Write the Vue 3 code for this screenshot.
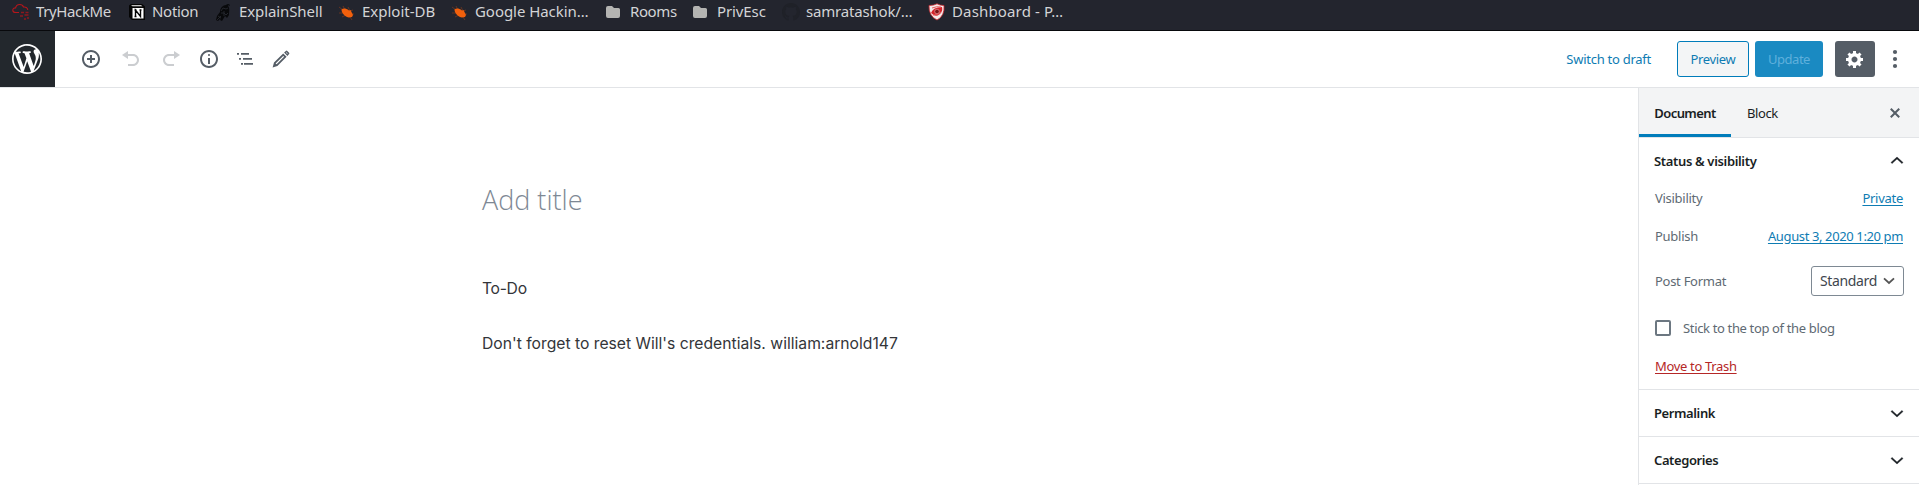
<script setup>
const bookmarks = [
  { label: 'TryHackMe', icon: 'cloud', width: 116, tracking: -0.38 },
  { label: 'Notion', icon: 'notion', width: 87, tracking: -0.3 },
  { label: 'ExplainShell', icon: 'shell', width: 123, tracking: -0.1 },
  { label: 'Exploit-DB', icon: 'bug', width: 113, tracking: 0 },
  { label: 'Google Hackin…', icon: 'bug', width: 155, tracking: -0.05 },
  { label: 'Rooms', icon: 'folder', width: 87, tracking: -0.4 },
  { label: 'PrivEsc', icon: 'folder', width: 89, tracking: -0.1 },
  { label: 'samratashok/…', icon: 'github', width: 146, tracking: -0.18 },
  { label: 'Dashboard - P…', icon: 'shield', width: 150, tracking: 0.15 },
]
const panels = ['Permalink', 'Categories']
</script>

<template>
  <div class="page">
    <nav class="bookmarks">
      <a v-for="b in bookmarks" :key="b.label" class="bookmark" :style="{ width: b.width + 'px', letterSpacing: b.tracking + 'px' }">
        <svg v-if="b.icon === 'cloud'" class="fav" viewBox="0 0 18 18" fill="none" stroke="#b5161c" stroke-width="1.1">
          <path d="M7 9.500H4C1.500 9.500.8 8.500.8 7.200.8 5.600 2 4.800 3.600 4.900 4 2.500 5.500 1.500 7.700 1.500 9.500 1.500 11 2.500 11.500 4c2-.3 4 .5 4.300 3" />
          <path d="M9 9.500h3M13.500 9.500h3M8 13h3M12.500 12h4M12 16h2M15 15h2" stroke="#8d171e" stroke-width="1.500" />
        </svg>
        <svg v-else-if="b.icon === 'notion'" class="fav" viewBox="0 0 18 18">
          <path d="M1 2.500 3 1h11l3 2.500V17H4L1 14z" fill="#050505" />
          <path d="M4.500 5h11v10.500h-11zM3 2.300h10l1.500 1H4.500z" fill="#fff" />
          <path d="M7.500 13.500V7l5 6.500V7M6.500 7h2M11.500 7h2M6.500 13.500h2" fill="none" stroke="#050505" stroke-width="1.400" />
        </svg>
        <svg v-else-if="b.icon === 'shell'" class="fav" viewBox="0 0 18 18">
          <path d="M5 9C5 5 8 2 11 2c2-2 4-1 4 1-1-1-2-1-2 0 2 2 1 6 1 9l-2 3-2-2-3 5-2-1 1-2-3 3-2-1 1-4z" fill="#08090b" />
          <path d="m6 8 2-3 3 1 2-1M6 10h3l2 2 2-2M3 13l3 2M9 8v5M2 17l4-4" fill="none" stroke="#2b2d35" stroke-width=".8" />
        </svg>
        <svg v-else-if="b.icon === 'bug'" class="fav" viewBox="0 0 18 18">
          <path d="M1 4l4 3M5 3l2 4M10 4l2 4 3-1M1 10h5M4 14l4-2M16 11l-3 0M12 14l2 3" fill="none" stroke="#6b3520" stroke-width=".9" />
          <path d="M3.500 6.500C5 5 8 5 11 7.500l1.500-.5 1 2 1.500 3-1 2-3 .5C8 14.500 3.500 10.500 3.500 6.500z" fill="#f2600c" />
        </svg>
        <svg v-else-if="b.icon === 'folder'" class="fav" viewBox="0 0 18 18">
          <path d="M0 5q0-2 2-2h4l2 2h4.500q1.500 0 1.500 1.500V13q0 2-2 2h-10Q0 15 0 13z" fill="#b4b4b2" />
        </svg>
        <svg v-else-if="b.icon === 'github'" class="fav" viewBox="0 0 16 16">
          <path fill="#1f2128" d="M8 0C3.580 0 0 3.580 0 8c0 3.540 2.290 6.530 5.470 7.590.4.070.55-.17.55-.38 0-.19-.01-.82-.01-1.490-2.010.37-2.530-.49-2.690-.94-.09-.23-.48-.94-.82-1.130-.28-.15-.68-.52-.01-.53.63-.01 1.080.58 1.230.82.72 1.210 1.870.87 2.330.66.07-.52.28-.87.51-1.070-1.780-.2-3.640-.89-3.640-3.950 0-.87.31-1.590.82-2.150-.08-.2-.36-1.020.08-2.120 0 0 .67-.21 2.200.82a7.600 7.600 0 0 1 4 0c1.530-1.040 2.200-.82 2.200-.82.44 1.100.16 1.920.08 2.120.51.56.82 1.270.82 2.150 0 3.070-1.870 3.750-3.650 3.950.29.25.54.73.54 1.480 0 1.070-.01 1.930-.01 2.200 0 .21.15.46.55.38A8 8 0 0 0 16 8c0-4.420-3.580-8-8-8z" />
        </svg>
        <svg v-else class="fav" viewBox="0 0 18 18">
          <path d="M1 2.500Q6 2.500 9 .8q3 1.700 7 1.700Q17 13 9 17 .5 13 1 2.500z" fill="#f4e9e9" stroke="#c9272d" stroke-width=".8" />
          <path d="M3 10Q5 4 14 4 15 8 12 11q-4 4-9-1z" fill="#d3232a" />
          <path d="M4 5q5-2 9-1M5 12q5 1 8-3" stroke="#e85a5c" fill="none" />
          <circle cx="9" cy="8.500" r="2.300" fill="#7c1216" stroke="#eeb0b0" stroke-width=".6" />
        </svg>
        <span class="name">{{ b.label }}</span>
      </a>
    </nav>

    <header class="header">
      <a class="logo">
        <svg width="30" height="30" viewBox="0 0 20 20" fill="#fff"><path d="M20 10c0-5.510-4.490-10-10-10C4.480 0 0 4.490 0 10c0 5.520 4.480 10 10 10 5.510 0 10-4.480 10-10zM7.780 15.370L4.370 6.220c.55-.02 1.170-.08 1.170-.08.5-.06.44-1.130-.06-1.110 0 0-1.450.11-2.370.11-.18 0-.37 0-.58-.01C4.120 2.690 6.870 1.110 10 1.110c2.330 0 4.450.87 6.050 2.340-.68-.11-1.650.39-1.650 1.580 0 .74.45 1.360.9 2.100.35.61.55 1.360.55 2.460 0 1.490-1.400 5-1.400 5l-3.030-8.370c.54-.02.82-.17.82-.17.5-.05.44-1.250-.06-1.220 0 0-1.440.12-2.380.12-.87 0-2.330-.12-2.330-.12-.5-.03-.56 1.200-.06 1.220l.92.08 1.260 3.410zM17.410 10c.24-.64.74-1.870.43-4.250.7 1.290 1.050 2.710 1.050 4.250 0 3.290-1.730 6.240-4.400 7.780.97-2.590 1.940-5.200 2.920-7.780zM6.100 18.090C3.120 16.650 1.110 13.530 1.110 10c0-1.300.23-2.480.72-3.590C3.250 10.300 4.670 14.200 6.100 18.090zm4.030-6.630l2.580 6.980c-.86.29-1.760.45-2.710.45-.79 0-1.570-.11-2.290-.33.81-2.380 1.620-4.740 2.420-7.100z" /></svg>
      </a>
      <div class="tools">
        <svg class="tool insert" viewBox="0 0 20 20"><path d="M10 1c-5 0-9 4-9 9s4 9 9 9 9-4 9-9-4-9-9-9zm0 16c-3.900 0-7-3.100-7-7s3.100-7 7-7 7 3.100 7 7-3.100 7-7 7zm1-11H9v3H6v2h3v3h2v-3h3V9h-3V6z" /></svg>
        <svg class="tool undo off" viewBox="0 0 20 20"><path d="M12 5H7V2L1 6l6 4V7h5c2.200 0 4 1.800 4 4s-1.800 4-4 4H7v2h5c3.300 0 6-2.700 6-6s-2.700-6-6-6z" /></svg>
        <svg class="tool redo off" viewBox="0 0 20 20"><path d="M8 5h5V2l6 4-6 4V7H8c-2.200 0-4 1.800-4 4s1.800 4 4 4h5v2H8c-3.300 0-6-2.700-6-6s2.700-6 6-6z" /></svg>
        <svg class="tool info" viewBox="0 0 20 20"><path d="M9 15h2V9H9v6zm1-10c-.5 0-1 .5-1 1s.5 1 1 1 1-.5 1-1-.5-1-1-1zm0-4c-5 0-9 4-9 9s4 9 9 9 9-4 9-9-4-9-9-9zm0 16c-3.900 0-7-3.100-7-7s3.100-7 7-7 7 3.100 7 7-3.100 7-7 7z" /></svg>
        <svg class="tool list" viewBox="0 0 20 20"><path d="M2 4h2v1.700H2zM6 4h8v1.700H6zM4 9h2v1.700H4zM8 9h9v1.700H8zM6 14h2v1.700H6zM9 14h9v1.700H9z" /></svg>
        <svg class="tool edit" viewBox="0 0 20 20"><path fill-rule="evenodd" d="M12.200 4.400 3 13.600 1.600 18.400 6.400 17l9.200-9.200zM4.600 14.500l7.600-7.600.9.900-7.500 7.500zM13.100 3.500 14.900 1.900q.7-.6 1.400 0l1.800 1.800q.6.7 0 1.400l-1.700 1.800zM14.900 3.700l1.400 1.400.4-.4-1.400-1.400z" /></svg>
      </div>
      <div class="actions">
        <a class="draft">Switch to draft</a>
        <button class="btn preview">Preview</button>
        <button class="btn update">Update</button>
        <button class="btn gear"><svg width="20" height="20" viewBox="0 0 20 20" fill="#fff"><path d="M18 12h-2.180c-.17.7-.44 1.350-.81 1.930l1.540 1.540-2.100 2.100-1.540-1.540c-.58.36-1.230.63-1.910.79V19H8v-2.180c-.68-.16-1.330-.43-1.910-.79l-1.540 1.540-2.120-2.120 1.540-1.540c-.36-.58-.63-1.230-.79-1.910H1V9.030h2.170c.16-.7.44-1.350.8-1.940L2.430 5.550l2.100-2.100 1.540 1.540c.58-.37 1.240-.64 1.930-.81V2h3v2.180c.68.16 1.330.43 1.910.79l1.540-1.540 2.120 2.120-1.540 1.540c.36.59.64 1.240.8 1.940H18V12zm-8.500 1.500c1.660 0 3-1.340 3-3s-1.340-3-3-3-3 1.340-3 3 1.340 3 3 3z" /></svg></button>
        <svg class="more" width="6" height="20" viewBox="0 0 6 20" fill="#555d66"><circle cx="3" cy="3" r="2.100" /><circle cx="3" cy="10" r="2.100" /><circle cx="3" cy="17" r="2.100" /></svg>
      </div>
    </header>

    <div class="body">
      <main class="canvas">
        <h1 class="title">Add title</h1>
        <p class="block todo">To-Do</p>
        <p class="block">Don't forget to reset Will's credentials. william:arnold147</p>
      </main>

      <aside class="sidebar">
        <div class="tabs">
          <button class="tab active">Document</button>
          <button class="tab">Block</button>
          <svg class="close" width="20" height="20" viewBox="0 0 20 20" fill="#555d66"><path d="M14.950 6.460L11.410 10l3.540 3.540-1.410 1.410L10 11.420l-3.530 3.530-1.420-1.420L8.580 10 5.050 6.470l1.420-1.420L10 8.580l3.540-3.530z" /></svg>
        </div>

        <section class="status">
          <div class="panel-head first">
            <span>Status &amp; visibility</span>
            <svg class="chev" viewBox="0 0 24 24"><path d="M12 8l-6 5.400 1 1.200 5-4.600 5 4.600 1-1.200z" /></svg>
          </div>
          <div class="row visibility"><span>Visibility</span><a class="link">Private</a></div>
          <div class="row publish"><span>Publish</span><a class="link date">August 3, 2020 1:20 pm</a></div>
          <div class="row format">
            <span>Post Format</span>
            <div class="select">
              <span>Standard</span>
              <svg width="12" height="8" viewBox="0 0 12 8" fill="none" stroke="#555" stroke-width="1.800"><path d="M1 1.300 6 6l5-4.700" /></svg>
            </div>
          </div>
          <label class="row sticky"><i class="check"></i><span>Stick to the top of the blog</span></label>
          <div class="row trash"><a class="link danger">Move to Trash</a></div>
        </section>

        <section v-for="p in panels" :key="p" class="panel-head">
          <span>{{ p }}</span>
          <svg class="chev" viewBox="0 0 24 24"><path d="M17 9.400L12 14 7 9.400l-1 1.200 6 5.400 6-5.400z" /></svg>
        </section>
      </aside>
    </div>
  </div>
</template>

<style>
body { margin: 0; overflow: hidden; background: #fff; }
</style>

<style scoped>
.page { box-sizing: border-box; height: 485px; overflow: hidden; font: 13px "Noto Sans", sans-serif; letter-spacing: -.33px; color: #191e23; }
.page * { box-sizing: border-box; }
.bookmarks { height: 31px; padding-left: 12px; display: flex; background: #23252e; border-bottom: 1px solid #08090c; color: #d3d4d6; font-size: 15px; }
.bookmark { flex: none; height: 24px; display: flex; align-items: center; gap: 6px; white-space: nowrap; }
.fav { width: 18px; height: 18px; flex: none; }
.name { padding-bottom: 2px; }
.header { height: 57px; display: flex; align-items: center; border-bottom: 1px solid #e2e4e7; background: #fff; }
.logo { width: 55px; height: 56px; display: flex; align-items: center; justify-content: center; background: #23282d; padding-right: 1px; }
.tools { display: flex; align-items: center; padding-left: 26px; }
.tool { width: 20px; height: 20px; fill: #555d66; margin-right: 20px; }
.off { opacity: .3; }
.redo { margin-right: 18px; }
.info { margin-right: 16px; }
.list { margin-right: 16px; }
.edit { margin: 0; }
.actions { margin-left: auto; display: flex; align-items: center; padding-right: 21px; }
.draft { color: #0e7cb3; margin-right: 26px; letter-spacing: -.26px; }
.btn { height: 36px; border: 0; border-radius: 3px; padding: 0; font: inherit; letter-spacing: inherit; }
.preview { width: 72px; border: 1px solid #007cba; background: #f3f5f6; color: #0e7cb3; margin-right: 6px; }
.update { width: 68px; background: #1a8ac2; color: #5fb0dc; letter-spacing: -.5px; margin-right: 12px; }
.gear { width: 40px; background: #555d66; display: flex; align-items: center; justify-content: center; margin-right: 17px; }
.body { display: flex; height: 397px; }
.canvas { flex: 1; padding: 93px 0 0 482px; font-family: Inter, sans-serif; letter-spacing: 0; color: #333539; }
.title { margin: 0; font: 300 27px/38px "Open Sans", sans-serif; letter-spacing: 0; color: #7e8894; }
.block { margin: 0; font-size: 15.7px; line-height: 28px; }
.todo { margin: 56px 0 27px; letter-spacing: -.3px; }
.sidebar { width: 281px; border-left: 1px solid #e2e4e7; background: #fff; }
.tabs { height: 50px; display: flex; align-items: center; background: #f3f4f5; border-bottom: 1px solid #e2e4e7; padding-right: 14px; }
.tab { height: 49px; border: 0; background: none; font: inherit; letter-spacing: -.4px; padding: 0 16px; color: #191e23; }
.tab.active { width: 92px; padding: 0; font-weight: 600; letter-spacing: -.58px; box-shadow: inset 0 -3px #007cba; }
.close { margin-left: auto; }
.status { height: 252px; border-bottom: 1px solid #e2e4e7; }
.panel-head { height: 47px; padding: 0 10px 0 15px; display: flex; align-items: center; justify-content: space-between; border-bottom: 1px solid #e2e4e7; font-weight: 600; letter-spacing: -.4px; }
.panel-head.first { height: 46px; border: 0; letter-spacing: -.34px; }
.chev { width: 24px; height: 24px; fill: #191e23; stroke: #191e23; stroke-width: .4; }
.row { display: flex; align-items: center; justify-content: space-between; padding: 0 16px; color: #606a73; letter-spacing: -.28px; }
.visibility { height: 28px; }
.publish { height: 48px; }
.format { height: 41px; padding-right: 15px; }
.link { color: #0e7cb3; text-decoration: underline; text-underline-offset: 2px; }
.date { letter-spacing: -.38px; }
.select { width: 93px; height: 30px; border: 1px solid #7e8993; border-radius: 3px; padding: 0 8px; display: flex; align-items: center; justify-content: space-between; font-size: 14px; letter-spacing: -.35px; color: #40464d; }
.sticky { height: 53px; justify-content: flex-start; gap: 12px; letter-spacing: -.35px; }
.check { width: 16px; height: 16px; border: 2px solid #6c7781; border-radius: 2px; }
.trash { height: 23px; }
.danger { color: #b52727; letter-spacing: -.33px; }
</style>
